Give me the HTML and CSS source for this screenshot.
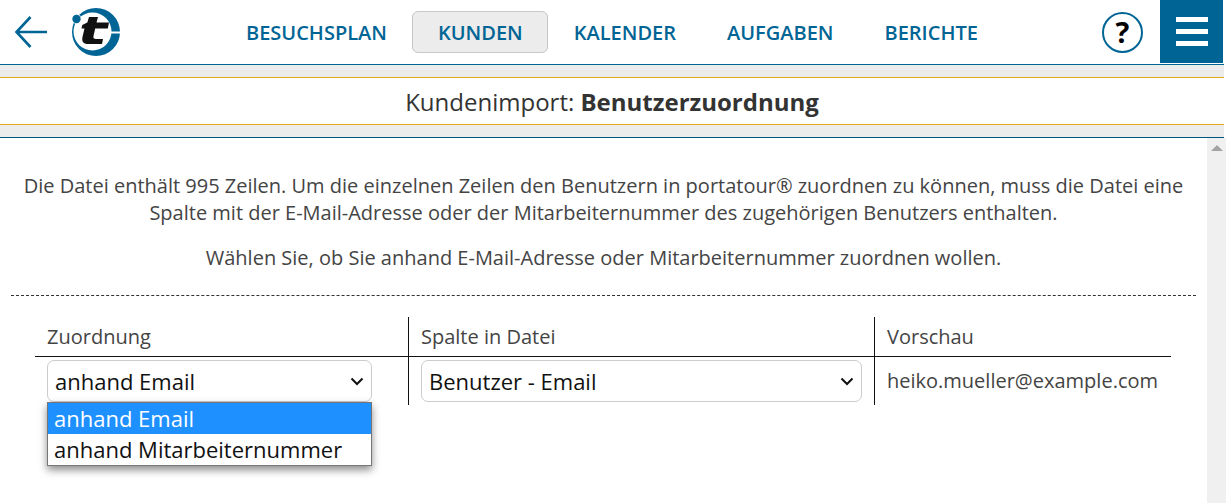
FILE: index.html
```html
<!DOCTYPE html>
<html lang="de">
<head>
<meta charset="utf-8">
<title>Kundenimport</title>
<link rel="stylesheet" href="styles.css">
</head>
<body>
<div class="frame">
  <header class="topbar">
    <a class="back" aria-label="Zurück">
      <svg width="36" height="34" viewBox="0 0 36 34"><path d="M34 17H4M17.500 2 3.500 17 17.500 32" fill="none" stroke="#006595" stroke-width="2.600"/></svg>
    </a>
    <a class="logo" aria-label="portatour">
      <svg width="52" height="52" viewBox="0 0 52 52">
        <path fill-rule="evenodd" d="M2 26a24 24 0 1 0 48 0a24 24 0 1 0-48 0ZM3.500 25.500a19 19 0 1 0 38 0a19 19 0 1 0-38 0Z" fill="#006595"/>
        <rect x="41" y="25.500" width="11" height="2" fill="#fff"/>
        <circle cx="6.500" cy="13" r="4.800" fill="#fff"/>
        <circle cx="6.500" cy="13" r="4.200" fill="#006595"/>
        <path d="M19 11h9l-1.500 5.500h12.500l-1.200 6H25.200l-1.700 7.500c-.5 2.200.5 3 2.500 3h7l-1 5H18c-4.500 0-6.500-2.500-5.500-7l2-8.500H11.500l.8-3.500 5-2.500Z" fill="#111"/>
      </svg>
    </a>
    <nav class="nav">
      <a class="nav-item">BESUCHSPLAN</a>
      <a class="nav-item active">KUNDEN</a>
      <a class="nav-item">KALENDER</a>
      <a class="nav-item">AUFGABEN</a>
      <a class="nav-item">BERICHTE</a>
    </nav>
    <a class="help" aria-label="Hilfe">?</a>
    <a class="menu" aria-label="Menü"><span></span><span></span><span></span></a>
  </header>
  <div class="band band-top"></div>
  <h1 class="title">Kundenimport: <b>Benutzerzuordnung</b></h1>
  <div class="band band-bottom"></div>
  <div class="scrollarea">
    <main class="content">
      <p class="intro">Die Datei enthält 995 Zeilen. Um die einzelnen Zeilen den Benutzern in portatour® zuordnen zu können, muss die Datei eine Spalte mit der E-Mail-Adresse oder der Mitarbeiternummer des zugehörigen Benutzers enthalten.</p>
      <p class="intro second">Wählen Sie, ob Sie anhand E-Mail-Adresse oder Mitarbeiternummer zuordnen wollen.</p>
      <hr class="divider">
      <div class="table">
        <div class="cell head c1">Zuordnung</div>
        <div class="cell head c2">Spalte in Datei</div>
        <div class="cell head c3">Vorschau</div>
        <div class="cell body c1">
          <div class="select">anhand Email<svg class="chev" width="14" height="9" viewBox="0 0 14 9"><path d="M1.500 1.500 7 7l5.500-5.500" fill="none" stroke="#111" stroke-width="2"/></svg></div>
          <ul class="popup">
            <li class="on">anhand Email</li>
            <li>anhand Mitarbeiternummer</li>
          </ul>
        </div>
        <div class="cell body c2">
          <div class="select">Benutzer - Email<svg class="chev" width="14" height="9" viewBox="0 0 14 9"><path d="M1.500 1.500 7 7l5.500-5.500" fill="none" stroke="#111" stroke-width="2"/></svg></div>
        </div>
        <div class="cell body c3 preview">heiko.mueller@example.com</div>
      </div>
    </main>
    <aside class="scrollbar"><svg width="12" height="6" viewBox="0 0 12 6"><path d="M6 0 12 6H0Z" fill="#a3a3a3"/></svg></aside>
  </div>
</div>
</body>
</html>
```

FILE: styles.css
```css
* { box-sizing: border-box; }
html, body { margin: 0; height: 100%; overflow: hidden; background: #fff; }
body { font-family: "Open Sans", "Liberation Sans", sans-serif; color: #333; }
.frame { width: 1226px; height: 503px; display: flex; flex-direction: column; }
.topbar { height: 65px; width: 1224px; display: flex; align-items: center; border-bottom: 1px solid #006595; flex: none; }
.back { width: 36px; height: 34px; margin-left: 13px; display: flex; }
.logo { width: 52px; height: 52px; margin-left: 21px; display: flex; }
.nav { display: flex; align-items: center; margin-left: 98.500px; }
.nav-item { color: #006595; font-size: 20px; font-weight: 600; line-height: 41px; height: 42px; padding: 0 24.500px; border: 1px solid transparent; border-radius: 6px; white-space: nowrap; }
.nav-item.active { background: #ececec; border-color: #c8c8c8; }
.help { width: 41px; height: 41px; margin-left: auto; border: 2.500px solid #006595; border-radius: 50%; color: #000; font-size: 29px; font-weight: 700; line-height: 36px; text-align: center; }
.menu { width: 63px; height: 63px; margin: 0 1px 0 17px; align-self: flex-start; background: #006595; display: flex; flex-direction: column; justify-content: center; align-items: center; gap: 7px; }
.menu span { display: block; width: 32px; height: 5px; background: #fff; }
.band { height: 13px; width: 1224px; background: #ececec; flex: none; }
.band-top { border-bottom: 1px solid #e6a817; }
.band-bottom { height: 14px; border-top: 1px solid #e6a817; border-bottom: 1px solid #00557f; }
.title { margin: 0; width: 1224px; height: 46px; flex: none; font-size: 24px; font-weight: 400; line-height: 48px; text-align: center; color: #333; }
.title b { font-weight: 700; }
.scrollarea { flex: 1; display: flex; min-height: 0; }
.content { width: 1207px; padding: 34px 11px 0; }
.scrollbar { width: 19px; background: #f0f0f0; display: flex; justify-content: center; padding-top: 7px; }
.scrollbar svg { display: block; }
.intro { margin: 0; font-size: 20px; line-height: 27px; text-align: center; color: #444; }
.second { margin-top: 18px; }
.divider { margin: 24px 0 0; border: 0; border-top: 1px dashed #333; }
.table { display: grid; grid-template-columns: 373px 466px 297px; margin: 21px 0 0 24px; width: 1136px; }
.cell { font-size: 20px; padding: 0 12px; color: #444; }
.c2, .c3 { border-left: 1px solid #111; }
.head { height: 40px; line-height: 39px; border-bottom: 1px solid #111; }
.body { height: 48px; padding-top: 3px; position: relative; }
.select { height: 42px; width: 325px; border: 1px solid #ccc; border-radius: 7px; padding: 0 7px; font-size: 22px; line-height: 40px; color: #111; position: relative; background: #fff; }
.c2 .select { width: 441px; }
.chev { position: absolute; right: 7px; top: 16px; }
.popup { position: absolute; left: 12px; top: 45px; width: 325px; margin: 0; padding: 0; list-style: none; background: #fff; border: 1px solid #767676; box-shadow: 0 4px 8px rgba(0,0,0,.45); z-index: 2; font-size: 22px; color: #111; }
.popup li { height: 31px; line-height: 31px; padding: 0 6px; }
.popup li.on { background: #1e90ff; color: #fff; }
.preview { padding-top: 0; line-height: 48px; }
```
